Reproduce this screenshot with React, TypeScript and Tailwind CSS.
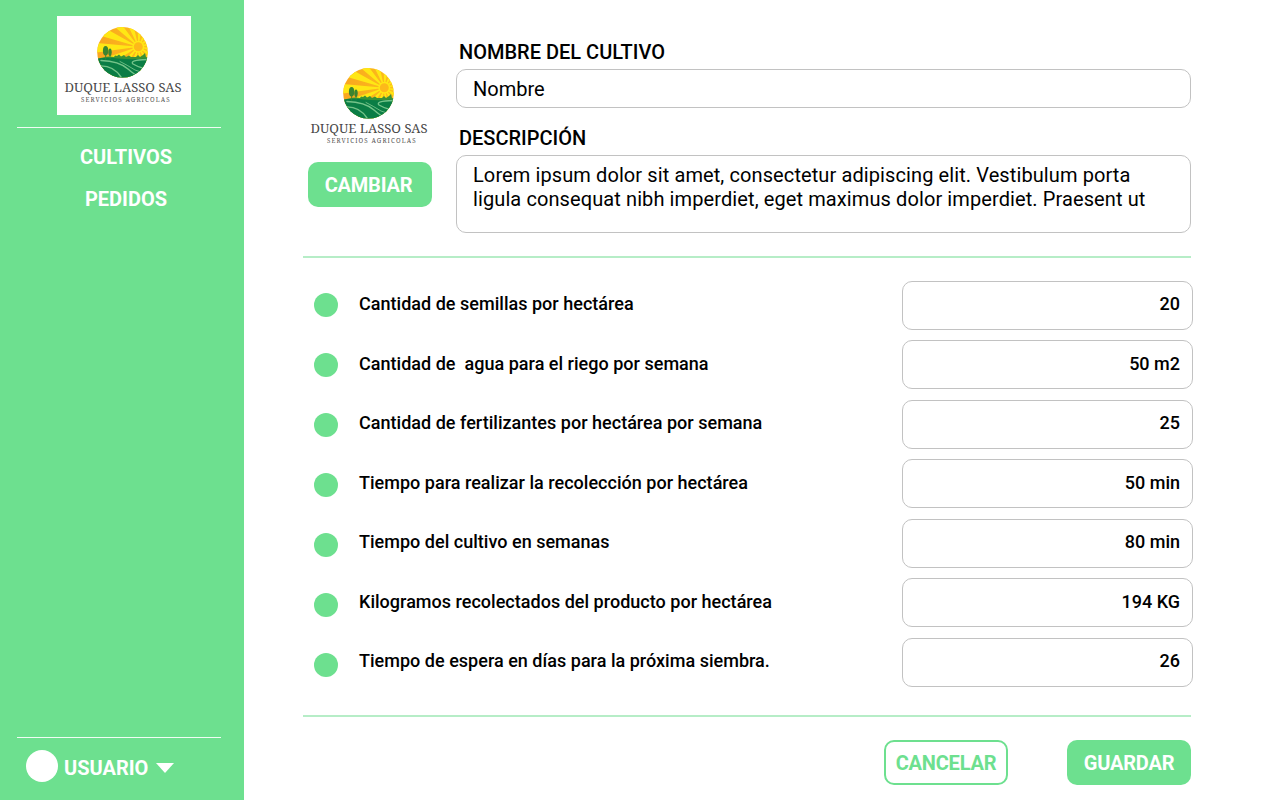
const fields = [
  { label: 'Cantidad de semillas por hectárea', value: '20' },
  { label: 'Cantidad de  agua para el riego por semana', value: '50 m2' },
  { label: 'Cantidad de fertilizantes por hectárea por semana', value: '25' },
  { label: 'Tiempo para realizar la recolección por hectárea', value: '50 min' },
  { label: 'Tiempo del cultivo en semanas', value: '80 min' },
  { label: 'Kilogramos recolectados del producto por hectárea', value: '194 KG' },
  { label: 'Tiempo de espera en días para la próxima siembra.', value: '26' },
];

const rays = Array.from({ length: 15 }, (_, i) => {
  const a = ((i * 24 + 4) * Math.PI) / 180;
  const b = a + 0.23;
  return `M81.3 30.7 L${81.3 + 60 * Math.cos(a)} ${30.7 + 60 * Math.sin(a)} L${81.3 + 60 * Math.cos(b)} ${30.7 + 60 * Math.sin(b)} Z`;
}).join(' ');

function Logo({ id }: { id: string }) {
  return (
    <svg viewBox="0 0 134 99" className="block h-[99px] w-[134px] shrink-0 bg-white font-['Noto_Serif','DejaVu_Serif',serif] font-normal">
      <defs>
        <clipPath id={id}>
          <circle cx="65.5" cy="36.3" r="25.3" />
        </clipPath>
        <linearGradient id={`${id}-sky`} x1="0" x2="1" y1="0" y2="0">
          <stop offset="0" stopColor="#f9a51f" />
          <stop offset="1" stopColor="#fcc01a" />
        </linearGradient>
      </defs>
      <g clipPath={`url(#${id})`}>
        <rect x="39" y="10" width="54" height="54" fill={`url(#${id}-sky)`} />
        <path d={rays} fill="#ffe714" />
        <circle cx="81.3" cy="30.7" r="6" fill="#ffe714" />
        <circle cx="81.3" cy="30.7" r="4.5" fill="#fdb91a" />
        <path d="M39 43 L46 41.5 Q52 40 57 41 L58 39.5 60 40 62 38.5 64 40.5 67 39 69 41 72 39.5 74 41 79 41 81 39 83 41 86 39 88 37 89 41 93 42 V64 H39 Z" fill="#3b9136" />
        <path d="M39 43 Q50 41 61 42.5 Q77 44 93 42 V64 H39 Z" fill="#0a7d45" />
        <g fill="none" stroke="#74c389" strokeLinecap="round">
          <path d="M44 44.5 Q62 45 71 53 T82 59" strokeWidth="1.5" />
          <path d="M42 50 Q56 49 64 61" strokeWidth="1.4" />
          <path d="M90 43.5 Q72 44 76 48 Q81 51 87 52.5" strokeWidth="1.4" />
          <path d="M63 45.5 Q70 49 78 54 L84 56" strokeWidth="0.9" />
        </g>
      </g>
      <g fill="#3c8430">
        <ellipse cx="48.6" cy="34.8" rx="2.7" ry="4.8" />
        <ellipse cx="53" cy="36.3" rx="1.7" ry="3.7" />
        <path d="M48.2 38h.9v5.5h-.9zM52.7 39h.7v4h-.7z" />
      </g>
      <text x="7.5" y="76" textLength="117" lengthAdjust="spacingAndGlyphs" fontSize="12.6" fill="#484848">DUQUE LASSO SAS</text>
      <text x="24" y="86.3" textLength="88.5" lengthAdjust="spacing" fontSize="6.2" fill="#555555">SERVICIOS AGRICOLAS</text>
    </svg>
  );
}

export default function App() {
  return (
    <div className="flex h-[800px] w-[1280px] overflow-hidden bg-white font-['Roboto',sans-serif] text-black">
      <aside className="flex w-[244px] shrink-0 flex-col bg-[#6de08f] px-[17px] pt-4 text-xl font-bold text-white">
        <div className="pl-10"><Logo id="sidebar-logo" /></div>
        <div className="mt-3 h-px w-[204px] bg-white/90" />
        <nav className="mt-2 flex w-[218px] flex-col items-center">
          <a className="h-[42px] leading-[42px]">CULTIVOS</a>
          <a className="h-[42px] leading-[42px]">PEDIDOS</a>
        </nav>
        <div className="mt-auto h-px w-[204px] bg-white/90" />
        <div className="flex h-[62px] items-start pt-3 pl-[9px]">
          <span className="size-8 rounded-full bg-white" />
          <span className="ml-1.5 leading-9">USUARIO</span>
          <svg viewBox="0 0 18 10" className="mt-[13px] ml-2 h-2.5 w-[18px]" fill="currentColor"><path d="M0 0H18L9 10Z" /></svg>
        </div>
      </aside>

      <main className="flex w-[949px] flex-col pl-[59px]">
        <section className="flex h-64 w-[888px]">
          <div className="flex w-[153px] shrink-0 flex-col pt-[57px]">
            <Logo id="crop-logo" />
            <button className="mt-1.5 ml-[5px] h-[45px] w-[124px] rounded-[10px] bg-[#6de08f] pr-[3px] text-xl font-bold tracking-[-0.2px] text-white">CAMBIAR</button>
          </div>
          <div className="flex grow flex-col">
            <label className="mt-10 ml-[3px] h-[29px] text-xl leading-6 font-medium">NOMBRE DEL CULTIVO</label>
            <div className="h-[39px] rounded-[10px] border border-[#c2c2c2] px-4 text-xl leading-[38px]">Nombre</div>
            <label className="mt-[18px] ml-[3px] h-[29px] text-xl leading-6 font-medium">DESCRIPCIÓN</label>
            <div className="h-[78px] rounded-[10px] border border-[#c2c2c2] px-4 pt-[7px] text-xl leading-6 tracking-[0.1px] whitespace-nowrap">
              <p>Lorem ipsum dolor sit amet, consectetur adipiscing elit. Vestibulum porta</p>
              <p>ligula consequat nibh imperdiet, eget maximus dolor imperdiet. Praesent ut</p>
            </div>
          </div>
        </section>
        <div className="h-0.5 w-[888px] bg-[#b6edc7]" />

        <section className="flex h-[457px] pt-[22.8px] text-lg font-medium">
          <div className="flex w-14 flex-col gap-9 pt-[12.2px] pl-[11px]">
            {fields.map((f) => <span key={f.label} className="size-6 shrink-0 rounded-full bg-[#6de08f]" />)}
          </div>
          <div className="flex w-[543px] flex-col gap-[10.5px] pt-[0.4px]">
            {fields.map((f) => <label key={f.label} className="h-[49px] leading-[46px] tracking-[0.02px] whitespace-pre">{f.label}</label>)}
          </div>
          <div className="flex w-[291px] flex-col gap-[10.5px]">
            {fields.map((f) => (
              <div key={f.label} className="h-[49px] shrink-0 rounded-[10px] border border-[#c2c2c2] pt-[0.4px] pr-3 text-right leading-[44px]">{f.value}</div>
            ))}
          </div>
        </section>
        <div className="h-0.5 w-[888px] bg-[#b6edc7]" />

        <footer className="flex w-[888px] justify-end gap-[59px] pt-[23px] text-xl font-bold tracking-[-0.2px]">
          <button className="h-[45px] w-[124px] rounded-[10px] border-2 border-[#6de08f] text-[#6de08f]">CANCELAR</button>
          <button className="h-[45px] w-[124px] rounded-[10px] bg-[#6de08f] text-white">GUARDAR</button>
        </footer>
      </main>
    </div>
  );
}
